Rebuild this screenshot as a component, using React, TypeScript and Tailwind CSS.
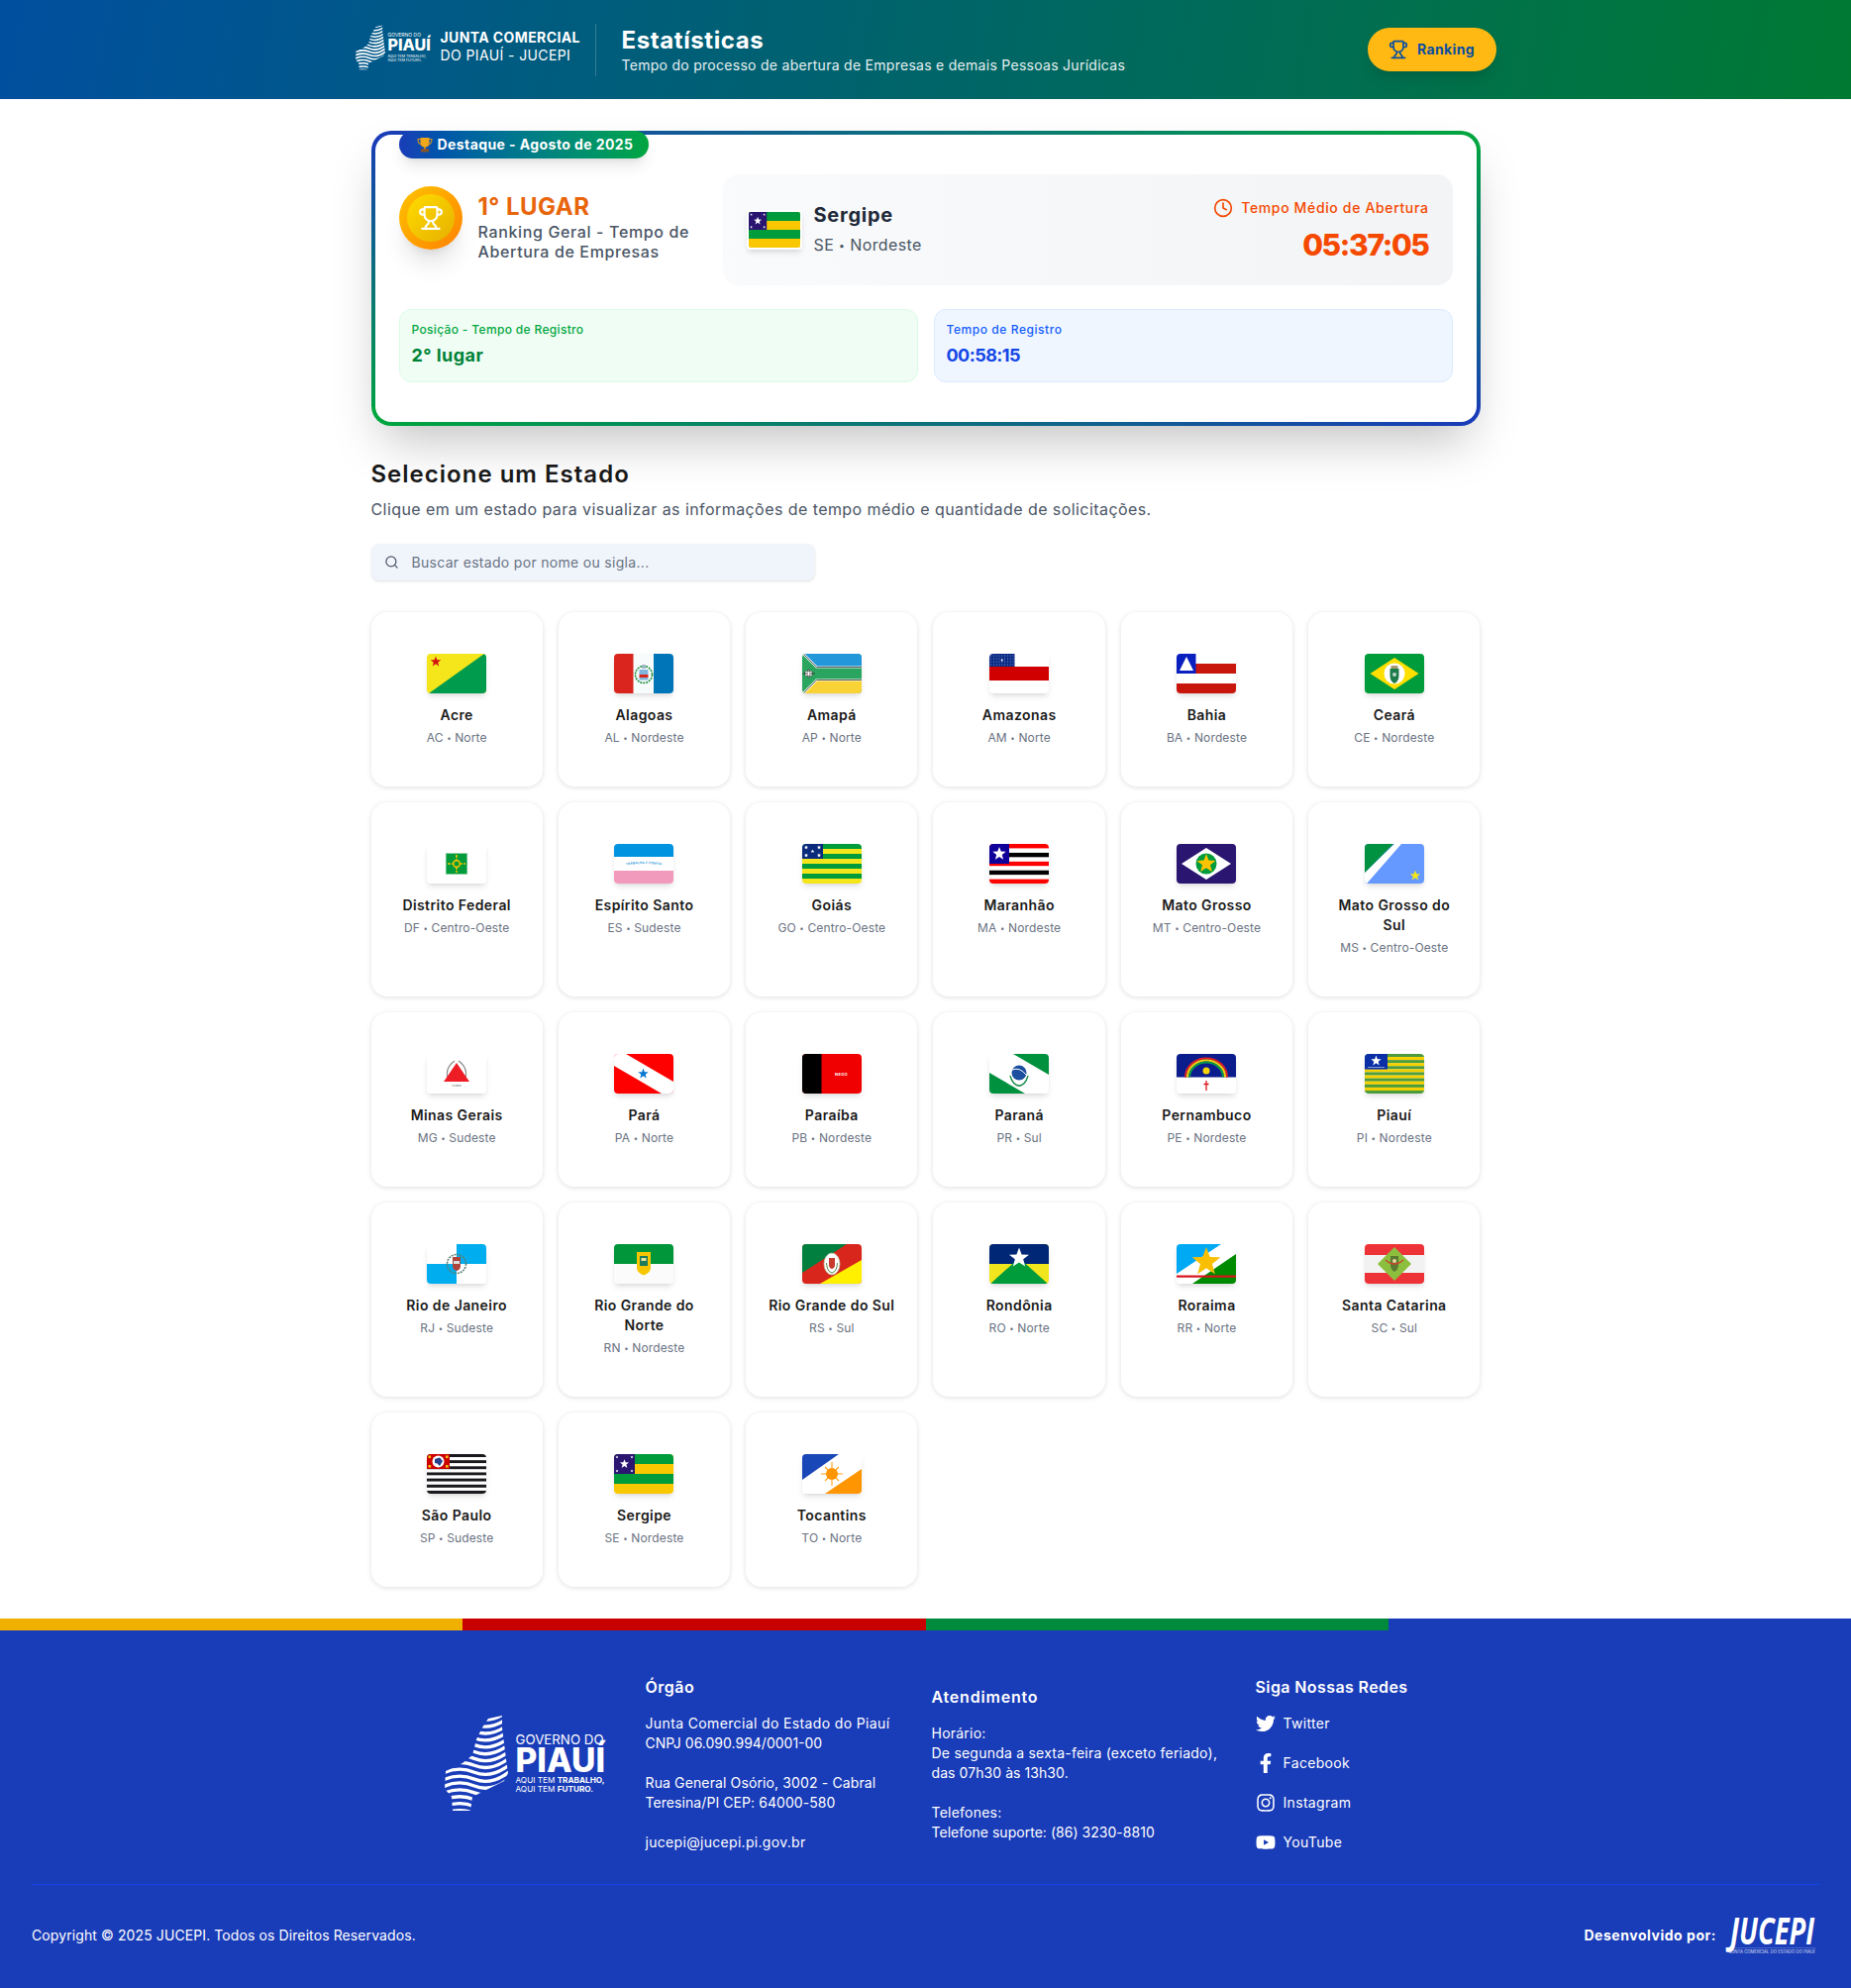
import React from "react";
import { Trophy, Clock, Search } from "lucide-react";
import { FaTwitter, FaFacebookF, FaInstagram, FaYoutube } from "react-icons/fa";

const starPts = (cx: number, cy: number, r: number) => {
  const p: string[] = [];
  for (let i = 0; i < 10; i++) {
    const a = (Math.PI / 5) * i - Math.PI / 2;
    const q = i % 2 === 0 ? r : r * 0.42;
    p.push(`${(cx + q * Math.cos(a)).toFixed(2)},${(cy + q * Math.sin(a)).toFixed(2)}`);
  }
  return p.join(" ");
};
const Star = ({ x, y, r, f = "#fff" }: { x: number; y: number; r: number; f?: string }) => (
  <polygon points={starPts(x, y, r)} fill={f} />
);
const Bands = ({ n, a, b }: { n: number; a: string; b: string }) => (
  <>
    {Array.from({ length: n }).map((_, i) => (
      <rect key={i} x="0" y={(i * 40) / n} width="60" height={40 / n + 0.1} fill={i % 2 === 0 ? a : b} />
    ))}
  </>
);

const flags: Record<string, React.ReactNode> = {
  AC: (
    <>
      <rect width="60" height="40" fill="#f4e61a" />
      <polygon points="58,0 60,0 60,40 2,40" fill="#009b4d" />
      <Star x={9} y={8} r={5.5} f="#d2120f" />
    </>
  ),
  AL: (
    <>
      <rect width="60" height="40" fill="#f7fbfb" />
      <rect width="19.5" height="40" fill="#d9251d" />
      <rect x="40" width="20" height="40" fill="#0076b9" />
      <circle cx="30" cy="21" r="8.5" fill="none" stroke="#1a8f3c" strokeWidth="1.6" strokeDasharray="2 1" />
      <rect x="25.5" y="16" width="9" height="5" fill="#7fb4dc" />
      <rect x="25.5" y="21" width="9" height="3" fill="#d9251d" />
      <rect x="25.5" y="24" width="9" height="2.5" fill="#7fb4dc" />
      <rect x="28" y="11" width="4" height="4" fill="#9fb8c8" />
    </>
  ),
  AP: (
    <>
      <rect width="60" height="40" fill="#2aa55f" />
      <polygon points="2,0 60,0 60,13 15,13" fill="#2298da" />
      <polygon points="15,27 60,27 60,40 2,40" fill="#f9d335" />
      <path d="M1,0 L14.5,13.5 L60,13.5 M1,40 L14.5,26.5 L60,26.5" fill="none" stroke="#fff" strokeWidth="2.2" />
      <path d="M1,0 L14.5,13.5 L60,13.5 M1,40 L14.5,26.5 L60,26.5" fill="none" stroke="#333" strokeWidth="0.8" />
      <path d="M6.5,15 L8,20 L13,20 L8,20 L6.5,25 L5,20 L0.5,20 L5,20 Z M3,17.5 h7 v5 h-7 z" fill="#fff" stroke="#333" strokeWidth="0.5" />
    </>
  ),
  AM: (
    <>
      <rect width="60" height="40" fill="#fff" />
      <rect y="13" width="60" height="14" fill="#d10000" />
      <rect width="25.5" height="13" fill="#0b2b85" />
      {Array.from({ length: 36 }).map((_, i) => (
        <circle key={i} cx={1.6 + (i % 9) * 2.8} cy={2 + Math.floor(i / 9) * 3} r="0.45" fill="#dfe6ff" />
      ))}
      <circle cx="12.7" cy="6.5" r="1" fill="#fff" />
    </>
  ),
  BA: (
    <>
      <rect width="60" height="40" fill="#fff" />
      <rect y="10" width="60" height="10" fill="#c8160c" />
      <rect y="30" width="60" height="10" fill="#c8160c" />
      <rect width="19.5" height="20" fill="#0a1fc0" />
      <polygon points="10,3 17,17 3,17" fill="#fff" />
    </>
  ),
  CE: (
    <>
      <rect width="60" height="40" fill="#009b3a" />
      <polygon points="5.5,20 30,4 54.5,20 30,36" fill="#fedf00" />
      <circle cx="30" cy="20" r="10.5" fill="#fff" />
      <path d="M25.5,15 h9 v7 q0,6 -4.5,8 q-4.5,-2 -4.5,-8 z" fill="#1f7a4a" />
      <rect x="26.5" y="12" width="7" height="3" fill="#a89a70" />
      <circle cx="30" cy="21" r="2" fill="#bcd9c8" />
    </>
  ),
  DF: (
    <>
      <rect width="60" height="40" fill="#fff" />
      <rect x="19.2" y="9.5" width="21.6" height="21" fill="#009b3a" stroke="#9bd6ae" strokeWidth="0.6" />
      <path d="M30,11 V29 M21,20 H39" stroke="#f5c400" strokeWidth="1.6" strokeDasharray="3 1" />
      <circle cx="30" cy="20" r="3.2" fill="#009b3a" stroke="#f5c400" strokeWidth="1.4" />
    </>
  ),
  ES: (
    <>
      <rect width="60" height="40" fill="#fff" />
      <rect width="60" height="13" fill="#0094e0" />
      <rect y="27" width="60" height="13" fill="#f29abc" />
      <path id="esarc" d="M7,22.5 Q30,17.5 53,22.5" fill="none" />
      <text fontSize="3.2" fontWeight="700" fill="#3ba3dc" fontFamily="Inter, sans-serif" letterSpacing="0.15">
        <textPath href="#esarc" startOffset="50%" textAnchor="middle">TRABALHA E CONFIA</textPath>
      </text>
    </>
  ),
  GO: (
    <>
      <Bands n={8} a="#009b3a" b="#f4e61a" />
      <rect width="21" height="15" fill="#0a2a7c" />
      <Star x={4} y={3.5} r={2.3} />
      <Star x={17} y={3.5} r={2.3} />
      <Star x={10.5} y={7.5} r={2} />
      <Star x={4} y={11.5} r={2.3} />
      <Star x={17} y={11.5} r={2.3} />
    </>
  ),
  MA: (
    <>
      <rect width="60" height="40" fill="#fff" />
      <rect width="60" height="4.4" fill="#ff0000" />
      <rect y="8.9" width="60" height="4.4" fill="#000" />
      <rect y="17.8" width="60" height="4.4" fill="#ff0000" />
      <rect y="26.7" width="60" height="4.4" fill="#000" />
      <rect y="35.6" width="60" height="4.4" fill="#ff0000" />
      <rect width="20" height="20" fill="#10009a" />
      <Star x={10} y={10} r={7} />
    </>
  ),
  MT: (
    <>
      <rect width="60" height="40" fill="#2a1670" />
      <polygon points="5,20 30,4 55,20 30,36" fill="#fff" />
      <circle cx="30" cy="20" r="10.5" fill="#009b3a" />
      <Star x={30} y={20} r={10} f="#fcc300" />
    </>
  ),
  MS: (
    <>
      <rect width="60" height="40" fill="#6699ff" />
      <polygon points="30,0 37,0 2,40 0,40 0,29" fill="#fff" />
      <polygon points="0,0 29,0 0,29" fill="#009240" />
      <Star x={51} y={32} r={5.5} f="#f4e61a" />
    </>
  ),
  MG: (
    <>
      <rect width="60" height="40" fill="#fff" />
      <path d="M22,27 Q17,15 28,7 M38,27 Q43,15 32,7" fill="none" stroke="#888" strokeWidth="1.2" />
      <polygon points="30,9 43,28 17,28" fill="#ee1c25" />
      <text x="30" y="33" textAnchor="middle" fontSize="2.4" fill="#444" fontFamily="Inter, sans-serif">TAMEN</text>
    </>
  ),
  PA: (
    <>
      <rect width="60" height="40" fill="#ff0000" />
      <polygon points="0,0 12,0 60,28 60,40 48,40 0,12" fill="#fff" />
      <Star x={29.5} y={20} r={5.5} f="#0a78d0" />
    </>
  ),
  PB: (
    <>
      <rect width="60" height="40" fill="#f00000" />
      <rect width="19.5" height="40" fill="#000" />
      <text x="39.5" y="21.5" textAnchor="middle" fontSize="4" fontWeight="700" fill="#fff" fontFamily="Inter, sans-serif">NEGO</text>
    </>
  ),
  PR: (
    <>
      <rect width="60" height="40" fill="#fff" />
      <polygon points="24,0 60,0 60,21" fill="#00913f" />
      <polygon points="0,19 0,40 36,40" fill="#00913f" />
      <circle cx="30" cy="19" r="7.5" fill="#1d4fa0" />
      <path d="M23,16 Q31,13 37,21" fill="none" stroke="#fff" strokeWidth="1" />
      <path d="M21,22 Q24,33 32,32 M39,22 Q36,33 28,32" fill="none" stroke="#1a8c4a" strokeWidth="1.4" />
    </>
  ),
  PE: (
    <>
      <rect width="60" height="40" fill="#fff" />
      <rect width="60" height="23.5" fill="#0b1c8c" />
      <path d="M9,23.5 A21,19 0 0 1 51,23.5" fill="none" stroke="#e01f26" strokeWidth="2" />
      <path d="M11,23.5 A19,17 0 0 1 49,23.5" fill="none" stroke="#f7d308" strokeWidth="2" />
      <path d="M13,23.5 A17,15 0 0 1 47,23.5" fill="none" stroke="#0a9b48" strokeWidth="2" />
      <circle cx="30" cy="17" r="3.5" fill="#f7d308" />
      <path d="M30,27 V37 M27.5,30.5 H32.5" stroke="#d9161c" strokeWidth="1.3" />
    </>
  ),
  PI: (
    <>
      <Bands n={13} a="#4c9c3c" b="#f7d000" />
      <rect width="23" height="15.5" fill="#0a2ea5" />
      <Star x={11.5} y={7} r={5.5} />
      <rect x="3" y="13" width="17" height="0.8" fill="#9fb3e8" />
    </>
  ),
  RJ: (
    <>
      <rect width="60" height="40" fill="#fff" />
      <rect x="30" width="30" height="20" fill="#00aeef" />
      <rect y="20" width="30" height="20" fill="#00aeef" />
      <circle cx="30" cy="20" r="9.5" fill="none" stroke="#5a7f73" strokeWidth="1.6" strokeDasharray="2 1" />
      <path d="M26,13 h8 v9 q0,4 -4,5 q-4,-1 -4,-5 z" fill="#b0433c" />
      <rect x="27" y="17" width="6" height="3" fill="#d8dfe0" />
    </>
  ),
  RN: (
    <>
      <rect width="60" height="40" fill="#fbfbfb" />
      <rect width="60" height="20" fill="#009639" />
      <path d="M23,8 h14 v16 q0,5 -7,7.5 q-7,-2.5 -7,-7.5 z" fill="#f6c700" />
      <rect x="26" y="12" width="8" height="10" fill="#1d7a5a" />
      <rect x="27.5" y="14" width="5" height="3" fill="#e8e3a0" />
    </>
  ),
  RS: (
    <>
      <rect width="60" height="40" fill="#d9261c" />
      <polygon points="0,0 45,0 0,29" fill="#007f3e" />
      <polygon points="60,16 60,40 18,40" fill="#fff000" />
      <ellipse cx="30" cy="20" rx="8" ry="11" fill="#fff" stroke="#b9c2a0" strokeWidth="0.8" />
      <path d="M27,14 h6 v7 q0,3 -3,4 q-3,-1 -3,-4 z" fill="#c73a2c" />
      <path d="M24.5,19 Q25,28 30,29 Q35,28 35.5,19" fill="none" stroke="#5a8a4a" strokeWidth="1" />
    </>
  ),
  RO: (
    <>
      <rect width="60" height="40" fill="#f1e51d" />
      <rect width="60" height="20" fill="#002776" />
      <polygon points="30,14 59,40 1,40" fill="#009b3a" />
      <Star x={30} y={14} r={10.5} />
    </>
  ),
  RR: (
    <>
      <rect width="60" height="40" fill="#fff" />
      <polygon points="0,0 45,0 0,30" fill="#00a9f4" />
      <polygon points="60,10 60,40 16,40" fill="#008a00" />
      <rect y="31.5" width="60" height="2.2" fill="#d8141c" />
      <Star x={30} y={18} r={15} f="#f9bf00" />
    </>
  ),
  SC: (
    <>
      <rect width="60" height="40" fill="#f2f2f2" />
      <rect width="60" height="11" fill="#ee3338" />
      <rect y="29" width="60" height="11" fill="#ee3338" />
      <polygon points="30,3 47,20 30,37 13,20" fill="#8dbf3e" />
      <path d="M26,12 h8 v9 q0,5 -4,7 q-4,-2 -4,-7 z" fill="#5a7a32" />
      <path d="M21,16 Q30,24 39,16" fill="none" stroke="#c9452e" strokeWidth="1.5" />
      <circle cx="30" cy="17" r="2" fill="#ecd9a0" />
    </>
  ),
  SP: (
    <>
      <Bands n={13} a="#1a1a1e" b="#fff" />
      <rect width="23" height="15" fill="#cc0000" />
      <circle cx="11.5" cy="7.5" r="6" fill="#fff" />
      <path d="M8,5 L13,3.5 L16,7 L13,12 L10.5,9.5 L8,9 Z" fill="#27408b" />
      <rect x="1.5" y="1.5" width="2.6" height="2.6" fill="#f5c400" />
      <rect x="19" y="1.5" width="2.6" height="2.6" fill="#f5c400" />
      <rect x="1.5" y="11" width="2.6" height="2.6" fill="#f5c400" />
      <rect x="19" y="11" width="2.6" height="2.6" fill="#f5c400" />
    </>
  ),
  SE: (
    <>
      <rect width="60" height="40" fill="#fac800" />
      <rect width="60" height="10" fill="#009b3a" />
      <rect y="20" width="60" height="10" fill="#009b3a" />
      <rect width="21" height="20" fill="#2a1670" />
      <Star x={10.5} y={10} r={4.8} />
      <Star x={3} y={3} r={1.6} />
      <Star x={18} y={3} r={1.6} />
      <Star x={3} y={17} r={1.6} />
      <Star x={18} y={17} r={1.6} />
    </>
  ),
  TO: (
    <>
      <rect width="60" height="40" fill="#fff" />
      <polygon points="0,0 37,0 0,26" fill="#1a47b8" />
      <polygon points="60,15 60,40 23,40" fill="#ff9500" />
      <path d="M30,8 V32 M19,20 H41 M23,13 L37,27 M37,13 L23,27" stroke="#ff9f14" strokeWidth="1.1" />
      <circle cx="30" cy="20" r="6" fill="#ff9500" />
    </>
  ),
};

const states: [string, string, string][] = [
  ["Acre", "AC", "Norte"],
  ["Alagoas", "AL", "Nordeste"],
  ["Amapá", "AP", "Norte"],
  ["Amazonas", "AM", "Norte"],
  ["Bahia", "BA", "Nordeste"],
  ["Ceará", "CE", "Nordeste"],
  ["Distrito Federal", "DF", "Centro-Oeste"],
  ["Espírito Santo", "ES", "Sudeste"],
  ["Goiás", "GO", "Centro-Oeste"],
  ["Maranhão", "MA", "Nordeste"],
  ["Mato Grosso", "MT", "Centro-Oeste"],
  ["Mato Grosso do Sul", "MS", "Centro-Oeste"],
  ["Minas Gerais", "MG", "Sudeste"],
  ["Pará", "PA", "Norte"],
  ["Paraíba", "PB", "Nordeste"],
  ["Paraná", "PR", "Sul"],
  ["Pernambuco", "PE", "Nordeste"],
  ["Piauí", "PI", "Nordeste"],
  ["Rio de Janeiro", "RJ", "Sudeste"],
  ["Rio Grande do Norte", "RN", "Nordeste"],
  ["Rio Grande do Sul", "RS", "Sul"],
  ["Rondônia", "RO", "Norte"],
  ["Roraima", "RR", "Norte"],
  ["Santa Catarina", "SC", "Sul"],
  ["São Paulo", "SP", "Sudeste"],
  ["Sergipe", "SE", "Nordeste"],
  ["Tocantins", "TO", "Norte"],
];

const FlagSvg = ({ uf }: { uf: string }) => (
  <svg viewBox="0 0 60 40" preserveAspectRatio="none" className="block w-full h-full">
    {flags[uf]}
  </svg>
);

const Dot = () => <span className="text-[0.65em] align-[0.1em]">•</span>;

const Waves = ({ className, id }: { className: string; id: string }) => (
  <svg viewBox="0 0 64 96" className={className} aria-hidden="true">
    <defs>
      <clipPath id={id}>
        <polygon points="44,3 58,0 58,12 60,28 62,44 64,58 60,66 44,74 28,82 26,96 8,96 7,82 0,74 1,56 18,48 28,40 32,24 38,12" />
      </clipPath>
    </defs>
    <g clipPath={`url(#${id})`}>
      {Array.from({ length: 16 }).map((_, i) => (
        <path key={i} d={`M-4,${i * 6.9 + 4} q17,-9 34,-2 t36,-8`} fill="none" stroke="#fff" strokeWidth="3.3" />
      ))}
    </g>
  </svg>
);

export default function App() {
  return (
    <div className="min-h-[2007px] bg-white text-[#1a1a1a] [font-family:Inter,sans-serif] tracking-[0.02em] flex flex-col">
      <header className="h-[100px] bg-[linear-gradient(100deg,#004f9f_0%,#007a33_100%)] text-white flex items-center">
        <div className="w-[1152px] mx-auto flex items-center justify-between">
          <div className="flex items-center">
            <div className="flex items-center w-[77px] gap-[3px] pb-[5px]">
              <Waves id="w1" className="w-[30px] h-[46px] shrink-0" />
              <div className="leading-none tracking-normal">
                <div className="text-[5px] leading-[6px]">GOVERNO DO</div>
                <div className="text-[16px] leading-[15px] font-extrabold">PIAUÍ</div>
                <div className="text-[3.6px] leading-[4.4px] mt-[2px]">AQUI TEM TRABALHO,</div>
                <div className="text-[3.6px] leading-[4.4px]">AQUI TEM FUTURO.</div>
              </div>
            </div>
            <div className="ml-[9px] w-[156px] text-[14px] leading-[18px] pb-[7px] tracking-[0.028em]">
              <div className="font-bold whitespace-nowrap">JUNTA COMERCIAL</div>
              <div className="whitespace-nowrap">DO PIAUÍ - JUCEPI</div>
            </div>
            <div className="border-l border-white/20 pl-[26px] h-[53px] flex flex-col justify-center">
              <h1 className="text-2xl font-bold leading-[31px] tracking-[0.025em] mt-px">Estatísticas</h1>
              <p className="text-sm leading-5 text-white/90 tracking-[0.02em]">Tempo do processo de abertura de Empresas e demais Pessoas Jurídicas</p>
            </div>
          </div>
          <button className="h-11 w-[130px] rounded-full bg-[#ffb912] shadow-lg flex items-center justify-center gap-[9px] text-sm font-bold text-[#0b4fa0] tracking-[0.025em]">
            <Trophy className="w-5 h-5" />
            Ranking
          </button>
        </div>
      </header>

      <main className="w-[1120px] mx-auto pt-8 pb-[32px]">
        <section className="relative rounded-[20px] p-1 shadow-2xl [background:linear-gradient(90deg,#193cb8,#00a63e)_top/100%_20px_no-repeat,linear-gradient(90deg,#00a63e,#193cb8)_bottom/100%_20px_no-repeat,linear-gradient(180deg,#193cb8,#00a63e)_left/20px_100%_no-repeat,linear-gradient(180deg,#00a63e,#193cb8)_right/20px_100%_no-repeat]">
          <div className="absolute top-0 left-7 h-7 w-[252px] rounded-full bg-gradient-to-r from-[#193cb8] to-[#00a63e] shadow-lg flex items-center pl-[18px] gap-[5px] text-sm font-bold text-white tracking-[0.03em]">
            <svg viewBox="0 0 16 16" className="w-4 h-4 shrink-0">
              <path d="M3.5,1 H12.5 V6 Q12.5,10.5 8,10.5 Q3.5,10.5 3.5,6 Z" fill="#f0a81c" />
              <path d="M4,2.5 H1 Q1,7.5 5,8 M12,2.5 H15 Q15,7.5 11,8" fill="none" stroke="#d8921a" strokeWidth="1.1" />
              <rect x="7" y="10" width="2" height="2.5" fill="#d8921a" />
              <rect x="4" y="12.5" width="8" height="3" fill="#8a5426" />
            </svg>
            Destaque - Agosto de 2025
          </div>
          <div className="bg-white rounded-[16px] px-6 py-10">
            <div className="flex gap-6">
              <div className="w-[303px] shrink-0 pt-3 flex gap-4 items-start">
                <div className="w-16 h-16 shrink-0 rounded-full bg-gradient-to-br from-[#ffc400] to-[#ff7f00] shadow-xl flex items-center justify-center">
                  <div className="w-12 h-12 rounded-full bg-gradient-to-br from-[#ffdc00] to-[#e6b000] flex items-center justify-center">
                    <Trophy className="w-[26px] h-[26px] text-white" />
                  </div>
                </div>
                <div className="mt-[5px]">
                  <div className="text-2xl leading-8 font-bold text-[#e8650c] tracking-[0.02em]">1° LUGAR</div>
                  <div className="text-base leading-5 font-medium text-[#4a5565] tracking-[0.04em] -mt-px">Ranking Geral - Tempo de Abertura de Empresas</div>
                </div>
              </div>
              <div className="flex-1 h-[112px] rounded-2xl bg-gradient-to-r from-gray-50 to-gray-100 px-6 flex items-center justify-between">
                <div className="flex items-center gap-3">
                  <div className="w-[56px] h-10 rounded border-2 border-white shadow-md overflow-hidden">
                    <FlagSvg uf="SE" />
                  </div>
                  <div>
                    <div className="text-xl font-bold leading-7 text-[#1e2939] tracking-[0.037em]">Sergipe</div>
                    <div className="text-base leading-6 mt-1 text-[#4a5565] tracking-[0.025em]">SE <Dot /> Nordeste</div>
                  </div>
                </div>
                <div className="text-right">
                  <div className="flex items-center justify-end gap-2 text-sm font-medium leading-5 text-[#f54900] tracking-[0.046em]">
                    <Clock className="w-5 h-5" />
                    Tempo Médio de Abertura
                  </div>
                  <div className="mt-[9px] text-3xl leading-9 font-extrabold text-[#f54900] tracking-[-0.045em]">05:37:05</div>
                </div>
              </div>
            </div>
            <div className="grid grid-cols-2 gap-4 mt-6">
              <div className="h-[74px] rounded-xl border border-green-100 bg-green-50 px-3 py-3">
                <div className="text-xs leading-4 font-medium text-green-600 tracking-[0.028em]">Posição - Tempo de Registro</div>
                <div className="mt-1 text-lg leading-7 font-bold text-green-700 tracking-[0.025em]">2° lugar</div>
              </div>
              <div className="h-[74px] rounded-xl border border-blue-100 bg-blue-50 px-3 py-3">
                <div className="text-xs leading-4 font-medium text-blue-600 tracking-[0.047em]">Tempo de Registro</div>
                <div className="mt-1 text-lg leading-7 font-bold text-blue-700 tracking-[-0.03em]">00:58:15</div>
              </div>
            </div>
          </div>
        </section>

        <h2 className="mt-[33px] text-2xl leading-8 font-semibold text-[#1a1a1a] tracking-[0.042em]">Selecione um Estado</h2>
        <p className="mt-[7px] text-base leading-6 text-[#4a5565] tracking-[0.027em]">Clique em um estado para visualizar as informações de tempo médio e quantidade de solicitações.</p>

        <div className="mt-[23px] w-[448px] h-[37px] rounded-lg bg-[#f0f5fc] shadow-sm flex items-center pl-[13px] gap-[13px] text-sm text-[#6a7282] tracking-[0.022em]">
          <Search className="w-[15px] h-[15px] text-[#4a5565]" />
          Buscar estado por nome ou sigla...
        </div>

        <div className="mt-[32px] grid grid-cols-6 gap-4">
          {states.map(([name, uf, region]) => (
            <div key={uf} className="bg-white rounded-2xl shadow-[0_1px_5px_rgba(0,0,0,0.13)] pt-[42px] pb-[40.75px] px-5 flex flex-col items-center text-center">
              <div className="w-[60px] h-10 rounded overflow-hidden bg-white shadow-md shrink-0">
                <FlagSvg uf={uf} />
              </div>
              <div className="mt-3 text-sm leading-5 font-semibold text-[#1a1a1a] tracking-[0.03em]">{name}</div>
              <div className="mt-[5px] text-xs leading-4 text-[#6a7282] whitespace-nowrap tracking-[0.012em]">
                {uf} <Dot /> {region}
              </div>
            </div>
          ))}
        </div>
      </main>

      <footer className="flex-1 bg-blue-800 text-white">
        <div className="grid grid-cols-4 h-3">
          <div className="bg-[#f0b000]" />
          <div className="bg-[#c80000]" />
          <div className="bg-[#008a3c]" />
          <div className="bg-[#193cb8]" />
        </div>
        <div className="pt-[45px] flex justify-center items-center gap-10">
          <div className="w-[163px] flex items-center gap-2">
            <Waves id="w2" className="w-[64px] h-[96px] shrink-0" />
            <div className="tracking-normal">
              <div className="text-[13.3px] leading-[14px] whitespace-nowrap">GOVERNO DO</div>
              <div className="text-[33.5px] leading-[28px] font-extrabold">PIAUÍ</div>
              <div className="text-[8.2px] leading-[9.5px] mt-[2px] whitespace-nowrap">AQUI TEM <b>TRABALHO,</b></div>
              <div className="text-[8.2px] leading-[9.5px] whitespace-nowrap">AQUI TEM <b>FUTURO.</b></div>
            </div>
          </div>
          <div className="w-[249px]">
            <div className="text-base leading-6 font-semibold mb-[15px] tracking-[0.03em]">Órgão</div>
            <div className="text-sm leading-5 whitespace-nowrap">
              <p className="tracking-[0.026em]">Junta Comercial do Estado do Piauí</p>
              <p className="tracking-normal">CNPJ 06.090.994/0001-00</p>
              <p className="mt-5 tracking-[0.009em]">Rua General Osório, 3002 - Cabral</p>
              <p className="tracking-[0.005em]">Teresina/PI CEP: 64000-580</p>
              <p className="mt-5 tracking-[0.022em]">jucepi@jucepi.pi.gov.br</p>
            </div>
          </div>
          <div className="w-[287px]">
            <div className="text-base leading-6 font-semibold mb-[15px] tracking-[0.05em]">Atendimento</div>
            <div className="text-sm leading-5 whitespace-nowrap tracking-[0.016em]">
              <p>Horário:</p>
              <p>De segunda a sexta-feira (exceto feriado),</p>
              <p className="tracking-[0.005em]">das 07h30 às 13h30.</p>
              <p className="mt-5">Telefones:</p>
              <p className="tracking-[0.002em]">Telefone suporte: (86) 3230-8810</p>
            </div>
          </div>
          <div className="w-[153px]">
            <div className="text-base leading-6 font-semibold mb-[15px] whitespace-nowrap tracking-[0.025em]">Siga Nossas Redes</div>
            <div className="flex flex-col gap-5 text-sm leading-5">
              <div className="flex items-center gap-2"><FaTwitter className="w-5 h-5" />Twitter</div>
              <div className="flex items-center gap-2"><FaFacebookF className="w-5 h-5" />Facebook</div>
              <div className="flex items-center gap-2"><FaInstagram className="w-5 h-5" />Instagram</div>
              <div className="flex items-center gap-2"><FaYoutube className="w-5 h-5" />YouTube</div>
            </div>
          </div>
        </div>
        <div className="mt-8 mx-8 border-t border-blue-700 h-[104px] flex items-center justify-between text-sm">
          <div className="tracking-[0.007em]">Copyright © 2025 JUCEPI. Todos os Direitos Reservados.</div>
          <div className="flex items-center gap-3 pr-1">
            <span className="font-bold tracking-[0.038em]">Desenvolvido por:</span>
            <div className="w-[88px] tracking-normal flex flex-col items-center">
              <div className="text-[37px] leading-[30px] italic font-bold [font-family:'Open_Sans',sans-serif] scale-x-[0.74] whitespace-nowrap">JUCEPI</div>
              <div className="w-[88px] mt-[2px] border-t border-white/20 text-[4.3px] leading-[7px] whitespace-nowrap text-white/80 text-center">JUNTA COMERCIAL DO ESTADO DO PIAUÍ</div>
            </div>
          </div>
        </div>
      </footer>
    </div>
  );
}
